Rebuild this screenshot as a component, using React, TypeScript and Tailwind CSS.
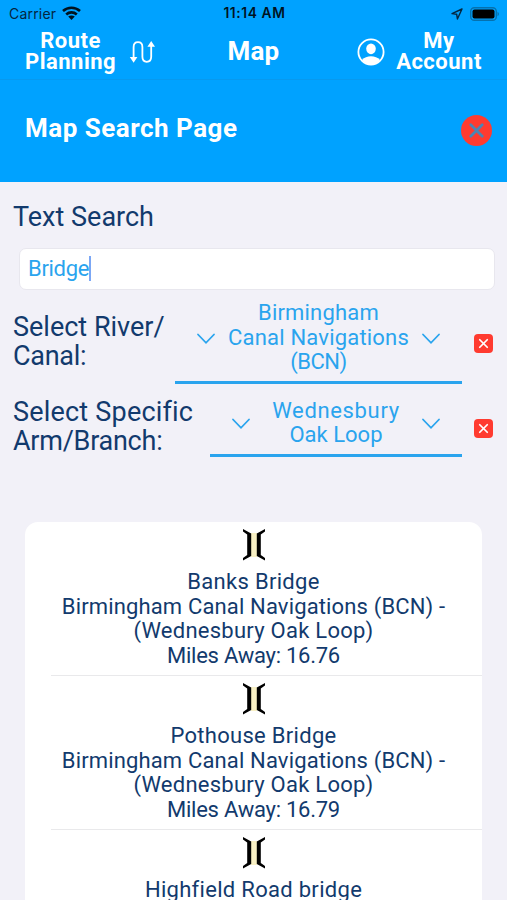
import { X } from 'lucide-react'

const BRIDGES = [
    { id: 1, name: 'Banks Bridge', miles: '16.76' },
    { id: 2, name: 'Pothouse Bridge', miles: '16.79' },
    { id: 3, name: 'Highfield Road bridge', miles: '16.94' },
]

function StatusBar() {
    return (
        <div className="flex h-[27px] items-center justify-between pr-[7px] pl-[9px] font-['Inter',sans-serif] text-[14px] text-[#04263f]">
            <div className="flex w-[160px] items-center gap-[6px]">
                <span className="tracking-[0.2px]">Carrier</span>
                <svg className="-mt-[2px]" width="19" height="14" viewBox="0 0 19 14" fill="none" stroke="#00131f" strokeWidth="2.6">
                    <path d="M1 5C5.8.6 13.2.6 18 5" />
                    <path d="M4.2 8.5c3-2.8 7.6-2.8 10.6 0" />
                    <path d="M9.5 14 6.2 10.6c1.9-1.6 4.7-1.6 6.6 0z" fill="#00131f" stroke="none" />
                </svg>
            </div>
            <span className="text-[13.8px] font-semibold tracking-[0.6px] text-[#00131f]">11:14 AM</span>
            <div className="flex w-[160px] items-center justify-end gap-[7px]">
                <svg width="12" height="12" viewBox="0 0 12 12" fill="none" stroke="#04263f" strokeWidth="1.4" strokeLinejoin="round">
                    <path d="M11 1 1 5.6l4.7.7.7 4.7z" />
                </svg>
                <svg width="30" height="14" viewBox="0 0 30 14">
                    <rect x=".7" y=".7" width="25.6" height="12.6" rx="3.6" fill="none" stroke="#0571ae" strokeWidth="1.4" />
                    <rect x="2.5" y="2.5" width="22" height="9" rx="2" fill="#000" />
                    <path d="M27.5 4.8c2 .8 2 3.6 0 4.4z" fill="#0571ae" />
                </svg>
            </div>
        </div>
    )
}

function NavBar() {
    return (
        <div className="flex h-[53px] border-b border-[#0899ee] text-[22px] leading-[21px] font-bold tracking-[0.5px] text-white">
            <div className="flex w-[200px] pl-[25px]">
                <div className="w-[91px] pt-[3px] text-center whitespace-nowrap">
                    <div>Route</div>
                    <div>Planning</div>
                </div>
                <svg
                    className="mt-[13px] ml-[13px]"
                    width="27"
                    height="24"
                    viewBox="0 0 27 24"
                    fill="none"
                    stroke="#fff"
                    strokeWidth="1.8">
                    <path d="M4.6 18V7.2c0-3.2 1.8-5 4.4-5s4.4 1.8 4.4 5v9.6c0 3.2 1.8 5 4.4 5s4.4-1.8 4.4-5V6" />
                    <path d="M.8 17h7.6L4.6 22.8zM18.4 6.8H26L22.2 1z" fill="#fff" stroke="none" />
                </svg>
            </div>
            <div className="w-[107px] pt-[11px] text-center text-[26px] leading-[26px] tracking-[0.2px]">Map</div>
            <div className="flex w-[200px] justify-end pr-[25px]">
                <svg className="mt-[11px] mr-[11px]" width="28" height="28" viewBox="0 0 28 28">
                    <circle cx="14" cy="14" r="12.6" fill="none" stroke="#fff" strokeWidth="1.8" />
                    <ellipse cx="14" cy="10.8" rx="4.8" ry="5.4" fill="#fff" />
                    <path d="M5 22c2.2-2.6 5.5-3.7 9-3.7s6.8 1.1 9 3.7c-2.4 3-5.5 4.5-9 4.500S7.400 25 5 22z" fill="#fff" />
                </svg>
                <div className="w-[86px] pt-[3px] text-center whitespace-nowrap">
                    <div>My</div>
                    <div>Account</div>
                </div>
            </div>
        </div>
    )
}

function Chevron() {
    return (
        <svg
            className="mt-[2px]"
            width="20"
            height="12"
            viewBox="0 0 20 12"
            fill="none"
            stroke="currentColor"
            strokeWidth="1.8"
            strokeLinecap="round">
            <path d="M2 1.5 10 9.800l8-8.300" />
        </svg>
    )
}

function ClearButton() {
    return (
        <button className="mr-[2px] flex size-[19px] items-center justify-center rounded-[4px] bg-[#ff3b30] text-white">
            <X size={15} strokeWidth={2.8} />
        </button>
    )
}

function BridgeIcon() {
    return (
        <svg className="mx-auto" width="22" height="32" viewBox="0 0 22 32">
            <path d="M8 4h6v24H8z" fill="#f8f0c4" />
            <path
                d="M0 0v2.500L4.200 5.500V26L0 29v2.500L8.200 27V4.500zM22 0v2.500L17.800 5.500V26L22 29v2.500L13.800 27V4.500z"
                fill="#000"
            />
        </svg>
    )
}

export default function App() {
    return (
        <div className="h-[900px] w-[507px] overflow-hidden bg-[#f2f1f8] font-['Roboto',sans-serif] text-[#123a6d]">
            <header className="h-[182px] bg-[#00a2ff]">
                <StatusBar />
                <NavBar />
                <div className="flex h-[101px] items-center justify-between pr-[15px] pl-[25px]">
                    <h1 className="pb-[4px] text-[26px] font-bold tracking-[0.5px] text-white">Map Search Page</h1>
                    <button className="flex size-[31px] items-center justify-center rounded-full bg-[#ff3b30] text-[#4b86b5]">
                        <X size={23} strokeWidth={2.8} />
                    </button>
                </div>
            </header>

            <section className="h-[340px] pr-[12px] pl-[13px]">
                <div className="pt-[20px] text-[27px] leading-[30px]">Text Search</div>
                <div className="mt-[16px] ml-[6px] flex h-[42px] items-center rounded-[7px] border border-[#e8e7ee] bg-white pb-[2px] pl-[8px] text-[22px] text-[#2aa4ee]">
                    <span className="tracking-[-0.300px]">Bridge</span>
                    <span className="h-[25px] w-[2px] bg-[#7ba7f5]" />
                </div>

                <div className="flex h-[94px]">
                    <div className="w-[162px] pt-[23px] text-[27px] leading-[29px] whitespace-nowrap">
                        <div>Select River/</div>
                        <div className="tracking-[-0.3px]">Canal:</div>
                    </div>
                    <div className="flex h-[94px] w-[287px] items-center justify-between border-b-[3px] border-[#2aa4ee] px-[21px] pt-[5px] text-[#2aa4ee]">
                        <Chevron />
                        <div className="text-center text-[22px] leading-[24.5px] whitespace-nowrap">
                            <div className="tracking-[0.2px]">Birmingham</div>
                            <div className="tracking-[0.2px]">Canal Navigations</div>
                            <div className="tracking-[-0.5px]">(BCN)</div>
                        </div>
                        <Chevron />
                    </div>
                    <div className="ml-auto pt-[44px]">
                        <ClearButton />
                    </div>
                </div>

                <div className="flex h-[73px]">
                    <div className="w-[197px] pt-[14px] text-[27px] leading-[29px] whitespace-nowrap">
                        <div className="tracking-[0.2px]">Select Specific</div>
                        <div className="tracking-[-0.25px]">Arm/Branch:</div>
                    </div>
                    <div className="flex h-[73px] w-[252px] items-center justify-between border-b-[3px] border-[#2aa4ee] px-[21px] pt-[8px] text-[#2aa4ee]">
                        <Chevron />
                        <div className="text-center text-[22px] leading-[24.5px] whitespace-nowrap">
                            <div className="tracking-[0.65px]">Wednesbury</div>
                            <div>Oak Loop</div>
                        </div>
                        <Chevron />
                    </div>
                    <div className="ml-auto pt-[35px]">
                        <ClearButton />
                    </div>
                </div>
            </section>

            <ul className="ml-[25px] w-[457px] rounded-t-[13px] bg-white text-center text-[22px] leading-[24.5px]">
                {BRIDGES.map(bridge => (
                    <li key={bridge.id} className="h-[154px]">
                        <div className="h-[153px] pt-[7px] whitespace-nowrap">
                            <BridgeIcon />
                            <div className="mt-[9px] tracking-[0.3px]">{bridge.name}</div>
                            <div className="tracking-[0.15px]">Birmingham Canal Navigations (BCN) -</div>
                            <div className="tracking-[0.25px]">(Wednesbury Oak Loop)</div>
                            <div className="tracking-[-0.25px]">Miles Away: {bridge.miles}</div>
                        </div>
                        <div className="ml-[26px] h-px bg-[#e9e9eb]" />
                    </li>
                ))}
            </ul>
        </div>
    )
}
